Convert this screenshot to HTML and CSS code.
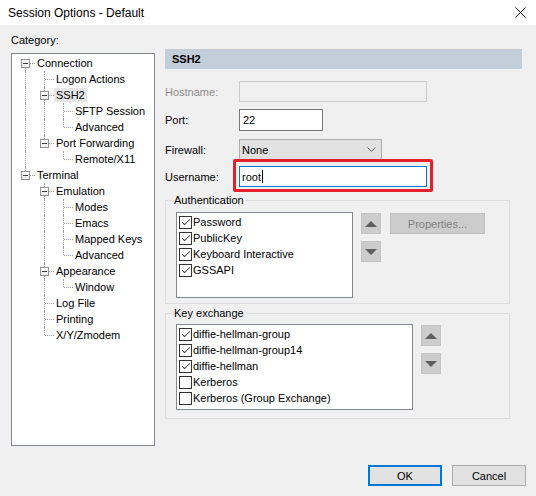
FILE: index.html
```html
<!DOCTYPE html>
<html>
<head>
<meta charset="utf-8">
<link rel="stylesheet" href="styles.css">
</head>
<body>
<div class="titlebar">
  <span class="title">Session Options - Default</span>
  <svg class="close" width="11" height="11" viewBox="0 0 11 11"><path d="M0.5 0.5L10.5 10.5M10.5 0.5L0.5 10.5" stroke="#111" stroke-width="1" fill="none"/></svg>
</div>
<div class="main">
  <div class="left">
    <div class="cat">Category:</div>
    <div class="tree">
      <div class="trow"><span class="cell box dn"><i class="bx"></i></span><span class="tx">Connection</span></div>
      <div class="trow"><span class="cell v"></span><span class="cell tee"></span><span class="tx">Logon Actions</span></div>
      <div class="trow"><span class="cell v"></span><span class="cell box up dn"><i class="bx"></i></span><span class="tx sel">SSH2</span></div>
      <div class="trow"><span class="cell v"></span><span class="cell v"></span><span class="cell tee"></span><span class="tx">SFTP Session</span></div>
      <div class="trow"><span class="cell v"></span><span class="cell v"></span><span class="cell end"></span><span class="tx">Advanced</span></div>
      <div class="trow"><span class="cell v"></span><span class="cell box up"><i class="bx"></i></span><span class="tx">Port Forwarding</span></div>
      <div class="trow"><span class="cell v"></span><span class="cell"></span><span class="cell end"></span><span class="tx">Remote/X11</span></div>
      <div class="trow"><span class="cell box up"><i class="bx"></i></span><span class="tx">Terminal</span></div>
      <div class="trow"><span class="cell"></span><span class="cell box up dn"><i class="bx"></i></span><span class="tx">Emulation</span></div>
      <div class="trow"><span class="cell"></span><span class="cell v"></span><span class="cell tee"></span><span class="tx">Modes</span></div>
      <div class="trow"><span class="cell"></span><span class="cell v"></span><span class="cell tee"></span><span class="tx">Emacs</span></div>
      <div class="trow"><span class="cell"></span><span class="cell v"></span><span class="cell tee"></span><span class="tx">Mapped Keys</span></div>
      <div class="trow"><span class="cell"></span><span class="cell v"></span><span class="cell end"></span><span class="tx">Advanced</span></div>
      <div class="trow"><span class="cell"></span><span class="cell box up dn"><i class="bx"></i></span><span class="tx">Appearance</span></div>
      <div class="trow"><span class="cell"></span><span class="cell v"></span><span class="cell end"></span><span class="tx">Window</span></div>
      <div class="trow"><span class="cell"></span><span class="cell tee"></span><span class="tx">Log File</span></div>
      <div class="trow"><span class="cell"></span><span class="cell tee"></span><span class="tx">Printing</span></div>
      <div class="trow"><span class="cell"></span><span class="cell end"></span><span class="tx">X/Y/Zmodem</span></div>
    </div>
  </div>
  <div class="right">
    <div class="hdr">SSH2</div>
    <div class="row r1"><span class="lbl dis">Hostname:</span><span class="inp host"></span></div>
    <div class="row r2"><span class="lbl">Port:</span><span class="inp port">22</span></div>
    <div class="row r3"><span class="lbl">Firewall:</span><span class="inp sel-box">None<svg class="chev" width="9" height="5" viewBox="0 0 9 5"><path d="M0.5 0.5L4.5 4.5L8.5 0.5" stroke="#606060" fill="none"/></svg></span></div>
    <div class="row r4"><span class="lbl">Username:</span><span class="hl"><span class="inp user">root<span class="caret"></span></span></span></div>

    <fieldset class="grp auth">
      <legend>Authentication</legend>
      <div class="gbody">
        <div class="list la">
          <div class="item"><span class="cb on"></span>Password</div>
          <div class="item"><span class="cb on"></span>PublicKey</div>
          <div class="item"><span class="cb on"></span>Keyboard Interactive</div>
          <div class="item"><span class="cb on"></span>GSSAPI</div>
        </div>
        <div class="arrows">
          <span class="abtn"><span class="tri-up"></span></span>
          <span class="abtn"><span class="tri-dn"></span></span>
        </div>
        <span class="prop">Properties...</span>
      </div>
    </fieldset>

    <fieldset class="grp kex">
      <legend>Key exchange</legend>
      <div class="gbody">
        <div class="list lk">
          <div class="item"><span class="cb on"></span>diffie-hellman-group</div>
          <div class="item"><span class="cb on"></span>diffie-hellman-group14</div>
          <div class="item"><span class="cb on"></span>diffie-hellman</div>
          <div class="item"><span class="cb"></span>Kerberos</div>
          <div class="item"><span class="cb"></span>Kerberos (Group Exchange)</div>
        </div>
        <div class="arrows">
          <span class="abtn"><span class="tri-up"></span></span>
          <span class="abtn"><span class="tri-dn"></span></span>
        </div>
      </div>
    </fieldset>
  </div>
</div>
<div class="foot">
  <span class="btn ok">OK</span>
  <span class="btn">Cancel</span>
</div>
</body>
</html>
```
FILE: styles.css
```css
html, body {
  margin: 0;
  padding: 0;
}
body {
  width: 536px;
  height: 496px;
  overflow: hidden;
  background: #f0f0f0;
  font-family: "Liberation Sans", Arial, sans-serif;
  font-size: 11px;
  color: #000;
}
.titlebar {
  height: 25px;
  background: #fff;
  display: flex;
  align-items: center;
  justify-content: space-between;
  padding: 0 10px 0 8px;
  font-size: 12px;
  color: #000;
}
.close {
  display: block;
}
.main {
  display: flex;
  gap: 10px;
  padding-left: 11px;
  height: 421px;
}
.left {
  width: 144px;
  padding-top: 8px;
}
.cat {
  height: 14px;
  line-height: 14px;
}
.tree {
  margin-top: 6px;
  height: 393px;
  box-sizing: border-box;
  border: 1px solid #828790;
  background: #fff;
  padding: 1px 0 0 4px;
}
.trow {
  display: flex;
  height: 16px;
  align-items: flex-start;
}
.cell {
  position: relative;
  flex: none;
  width: 19px;
  height: 16px;
}
.v::before, .tee::before {
  content: "";
  position: absolute;
  left: 9px;
  top: 0;
  height: 16px;
  border-left: 1px dotted #a0a0a0;
}
.end::before {
  content: "";
  position: absolute;
  left: 9px;
  top: 0;
  height: 8px;
  border-left: 1px dotted #a0a0a0;
}
.tee::after, .end::after {
  content: "";
  position: absolute;
  left: 10px;
  top: 8px;
  width: 9px;
  border-top: 1px dotted #a0a0a0;
}
.box::before {
  content: "";
  position: absolute;
  left: 14px;
  top: 8px;
  width: 5px;
  border-top: 1px dotted #a0a0a0;
}
.bx {
  position: absolute;
  left: 5px;
  top: 4px;
  width: 9px;
  height: 9px;
  box-sizing: border-box;
  border: 1px solid #919191;
  background: linear-gradient(#3c3c3c, #3c3c3c) center / 5px 1px no-repeat, linear-gradient(#ffffff, #ececec);
}
.up .bx::before {
  content: "";
  position: absolute;
  left: 3px;
  top: -5px;
  height: 4px;
  border-left: 1px dotted #a0a0a0;
}
.dn .bx::after {
  content: "";
  position: absolute;
  left: 3px;
  top: 8px;
  height: 3px;
  border-left: 1px dotted #a0a0a0;
}
.tx {
  padding: 0 2px;
  margin-top: 1px;
  line-height: 14px;
  height: 14px;
  white-space: nowrap;
}
.tx.sel {
  background: #e5e5e5;
}
.right {
  width: 357px;
  padding-top: 24px;
}
.hdr {
  height: 20px;
  line-height: 20px;
  background: #c3cedb;
  font-weight: bold;
  padding-left: 7px;
}
.row {
  display: flex;
  align-items: center;
}
.r1 { margin-top: 12px; }
.r2 { margin-top: 7px; }
.r3 { margin-top: 8px; }
.r4 { margin-top: 6px; }
.lbl {
  width: 74px;
  flex: none;
}
.lbl.dis {
  color: #8d8d8d;
}
.inp {
  display: flex;
  align-items: center;
  box-sizing: border-box;
  height: 21px;
  border: 1px solid #7a7a7a;
  background: #fff;
  padding-left: 3px;
}
.host {
  width: 188px;
  border-color: #cccccc;
  background: #f0f0f0;
}
.port {
  width: 84px;
  height: 22px;
}
.sel-box {
  width: 143px;
  background: #e1e1e1;
  border-color: #adadad;
  padding-left: 2px;
  justify-content: space-between;
  padding-right: 5px;
}
.chev {
  display: block;
}
.hl {
  position: relative;
  display: block;
}
.hl::after {
  content: "";
  position: absolute;
  left: -6px;
  right: -6px;
  top: -7px;
  bottom: -5px;
  border: 3px solid #e5202c;
  border-radius: 2px;
}
.user {
  width: 188px;
  border-color: #0078d7;
  padding-left: 2px;
}
.caret {
  display: inline-block;
  width: 0;
  height: 13px;
  border-left: 1px solid #000;
  margin-left: 1px;
}
.grp {
  box-sizing: border-box;
  width: 345px;
  margin: 6px 0 0 0;
  border: 1px solid #dcdcdc;
  padding: 5px 8px 5px 10px;
  min-width: 0;
}
.grp legend {
  padding: 0 2px;
  margin-left: -4px;
  line-height: 14px;
}
.kex {
  margin-top: 2px;
  padding-top: 4px;
  padding-bottom: 8px;
}
.gbody {
  display: flex;
  align-items: flex-start;
}
.list {
  box-sizing: border-box;
  height: 86px;
  border: 1px solid #828790;
  background: #fff;
  padding: 1px 0 0 2px;
  flex: none;
}
.la { width: 177px; }
.lk { width: 237px; }
.item {
  display: flex;
  align-items: center;
  height: 16px;
  white-space: nowrap;
}
.cb {
  position: relative;
  box-sizing: border-box;
  width: 13px;
  height: 13px;
  border: 1px solid #333;
  background: #fff;
  margin-right: 1px;
  flex: none;
}
.cb.on::after {
  content: "";
  position: absolute;
  left: 3.5px;
  top: 0.5px;
  width: 3px;
  height: 7px;
  border: solid #4a4a4a;
  border-width: 0 1px 1px 0;
  transform: rotate(45deg);
}
.arrows {
  display: flex;
  flex-direction: column;
  gap: 7px;
  margin-left: 8px;
  margin-top: 1px;
}
.abtn {
  box-sizing: border-box;
  width: 20px;
  height: 21px;
  background: #cccccc;
  border: 1px solid #c4c4c4;
  display: flex;
  align-items: center;
  justify-content: center;
}
.tri-up {
  width: 0;
  height: 0;
  border-left: 6px solid transparent;
  border-right: 6px solid transparent;
  border-bottom: 6px solid #5f5f5f;
}
.tri-dn {
  width: 0;
  height: 0;
  border-left: 6px solid transparent;
  border-right: 6px solid transparent;
  border-top: 6px solid #5f5f5f;
}
.prop {
  box-sizing: border-box;
  width: 95px;
  height: 21px;
  margin-left: 9px;
  margin-top: 1px;
  background: #cccccc;
  border: 1px solid #bfbfbf;
  color: #838383;
  display: flex;
  align-items: center;
  justify-content: center;
}
.foot {
  display: flex;
  justify-content: flex-end;
  gap: 10px;
  padding-right: 10px;
  margin-top: 19px;
}
.btn {
  box-sizing: border-box;
  width: 74px;
  height: 21px;
  background: #e1e1e1;
  border: 1px solid #adadad;
  display: flex;
  align-items: center;
  justify-content: center;
}
.btn.ok {
  border: 2px solid #0078d7;
}
```
